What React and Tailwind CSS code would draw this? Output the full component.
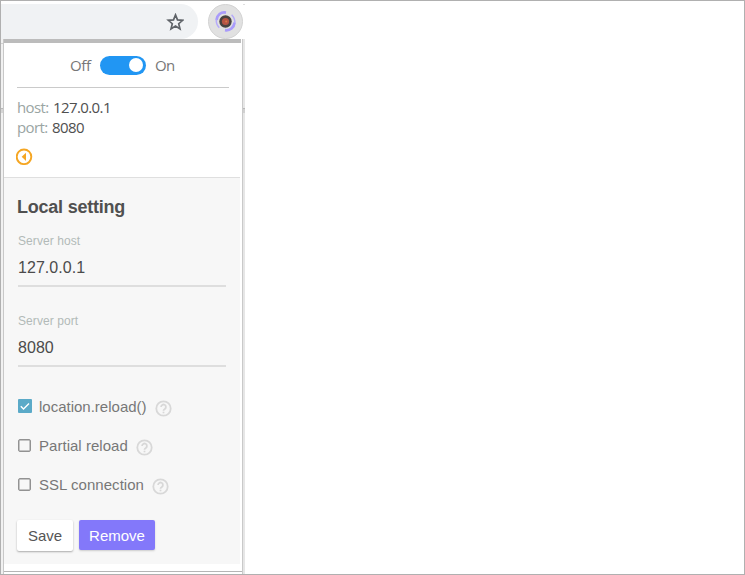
import React from 'react';

function HelpIcon() {
  return (
    <svg className="mt-[3px] h-[17px] w-[17px] shrink-0" viewBox="0 0 17 17" fill="none" stroke="#d8d8d8" strokeWidth="1.800">
      <circle cx="8.500" cy="8.500" r="7.200" />
      <path d="M6.100 7a2.400 2.400 0 1 1 3.800 1.900C9 9.500 8.500 9.800 8.500 10.700" />
      <path d="M8.500 11.700v1.600" />
    </svg>
  );
}

function StarIcon() {
  return (
    <svg className="h-[18px] w-[18px]" viewBox="0 0 18 18" fill="none" stroke="#5f6368" strokeWidth="1.700">
      <path d="M9.500 1.900l2 5 5.200.4-4 3.400 1.300 5.200L9.500 13.100l-4.500 2.800 1.300-5.200-4-3.400L7.500 6.900z" />
    </svg>
  );
}

function ExtensionIcon() {
  return (
    <svg className="h-[35px] w-[35px] shrink-0" viewBox="0 0 35 35" fill="none">
      <circle cx="17.500" cy="17.500" r="17" fill="#e1e1e1" stroke="#d2d2d2" />
      <path d="M18 8.600C13 7.600 9 11 8.500 16" stroke="#a99bfa" strokeWidth="2.700" />
      <path d="M8.300 15.500q-.3 5 3 8.300" stroke="#b5aafa" strokeWidth="1.500" />
      <path d="M17 26.200C22 27 26 23.500 26.600 18.500" stroke="#a99bfa" strokeWidth="2.700" />
      <path d="M26.800 19q.3-5-3.200-8.300" stroke="#b5aafa" strokeWidth="1.500" />
      <circle cx="17.500" cy="17.500" r="6.200" fill="#474340" />
      <circle cx="17.500" cy="17.500" r="3.600" fill="#b65443" />
      <circle cx="18.200" cy="17.500" r="1" fill="#d87945" />
    </svg>
  );
}

function Field({ label, value, labelTracking }) {
  return (
    <div className="h-20 w-[208px]">
      <div className="h-[14px] text-[12px] leading-[14px] text-[#b2bab8]">
        <span className={labelTracking}>{label}</span>
      </div>
      <div className="mt-[9px] h-[30px] border-b-2 border-[#dedede] text-[16px] leading-[22px] text-[#4b4b4b]">
        <span className="tracking-[0.050px]">{value}</span>
      </div>
    </div>
  );
}

function Option({ label, checked, tracking }) {
  return (
    <div className="flex h-[39px] items-start">
      <div className="flex h-[18px] w-[21px] shrink-0 items-center">
        {checked ? (
          <svg className="h-[14px] w-[14px]" viewBox="0 0 14 14" fill="none">
            <rect width="14" height="14" rx="1" fill="#5baac8" />
            <path d="M2.800 7.200l2.700 2.700 5.500-5.500" stroke="#fff" strokeWidth="1.400" />
          </svg>
        ) : (
          <div className="h-[13px] w-[13px] rounded-[2px] border border-[#929292] shadow-[inset_0_0_0_0.500px_#929292]" />
        )}
      </div>
      <span className={`mr-[8px] whitespace-nowrap text-[15px] leading-5 text-[#777] ${tracking}`}>{label}</span>
      <HelpIcon />
    </div>
  );
}

export default function App() {
  return (
    <div className="h-[575px] w-[745px] overflow-hidden border border-[#b0b0b0] bg-white font-['Liberation_Sans',Arial,sans-serif]">
      <div className="flex h-[38px] w-[244px] overflow-hidden pt-[3px]">
        <div className="flex h-[35px] w-[197px] items-center justify-end rounded-r-full bg-[#f0f2f4] pr-[14px]">
          <StarIcon />
        </div>
        <div className="ml-[10px] flex flex-1">
          <ExtensionIcon />
          <div className="h-px flex-1 bg-[#dedede]" />
        </div>
      </div>
      <div className="flex h-[535px] w-[244px]">
        <div className="w-[3px] shrink-0 border-r border-[#c8c8c8] bg-[#f1f1f1]">
          <div className="h-[5px] border-b border-[#d0d0d0]" />
          <div className="mt-[64px] h-[5px] border-t border-[#b8b8b8] bg-[#d5d5d5]" />
        </div>
        <div className="flex h-[533px] w-[238px] shrink-0 flex-col border-b border-[#b5b5b5] bg-white">
          <div className="h-1 w-[237px] shrink-0 bg-[#bcbcbc]" />
          <div className="h-[134px] pl-[13px] font-['Open_Sans','Noto_Sans',sans-serif]">
            <div className="flex h-[45px] w-[212px] items-center border-b border-[#cacaca] pl-[53px] text-[15px] text-[#777]">
              <span className="w-[30px] tracking-[-0.300px]">Off</span>
              <div className="flex h-[19px] w-[46px] shrink-0 items-center justify-end rounded-full bg-[#2196f3] pr-[3px]">
                <div className="h-[14px] w-[14px] rounded-full bg-white" />
              </div>
              <span className="ml-[9px] tracking-[-0.700px]">On</span>
            </div>
            <div className="pt-[9px] text-[15px] leading-5 text-[#4f4f4f]">
              <div className="flex whitespace-nowrap"><span className="w-9 tracking-[-0.600px] text-[#9aa5a3]">host:</span><span className="tracking-[-0.600px]">127.0.0.1</span></div>
              <div className="flex whitespace-nowrap"><span className="w-[35px] tracking-[-0.600px] text-[#9aa5a3]">port:</span><span className="tracking-[-0.600px]">8080</span></div>
            </div>
            <svg className="-ml-px mt-[11px] h-[17px] w-[17px]" viewBox="0 0 17 17" fill="none">
              <circle cx="8" cy="8.800" r="7.300" stroke="#f5a623" strokeWidth="1.900" />
              <path d="M10 4.700v8.200L5.700 8.800z" fill="#f5a623" />
            </svg>
          </div>
          <div className="h-[387px] w-[236px] border-t border-[#dfdfdf] bg-[#f7f7f7] pl-[13px] pt-[18px]">
            <h1 className="h-[38px] whitespace-nowrap text-[18px] font-bold leading-[22px] tracking-[-0.230px] text-[#505050]">Local setting</h1>
            <div className="pl-px">
              <Field label="Server host" value="127.0.0.1" labelTracking="tracking-[0.080px]" />
              <Field label="Server port" value="8080" labelTracking="tracking-[0.080px]" />
              <div className="pt-[3px]">
                <Option label="location.reload()" checked tracking="tracking-[0px]" />
                <Option label="Partial reload" tracking="tracking-[0.030px]" />
                <Option label="SSL connection" tracking="tracking-[0.030px]" />
              </div>
            </div>
            <div className="mt-[6px] flex gap-[6px] text-[15px]">
              <button className="h-[31px] w-[56px] rounded-[2px] bg-white pt-px text-[#555] shadow-[0_1px_2px_#aaa]">Save</button>
              <button className="h-[30px] w-[76px] rounded-[2px] bg-[#8378fa] pt-[2px] text-white shadow-[0_1px_2px_#ccc]">Remove</button>
            </div>
          </div>
        </div>
        <div className="w-[3px] shrink-0 border-l border-[#c9c9c9] bg-[#e6e6e6]">
          <div className="mt-[69px] h-[5px] border-t border-[#b8b8b8] bg-[#d0d0d0]" />
        </div>
      </div>
    </div>
  );
}
